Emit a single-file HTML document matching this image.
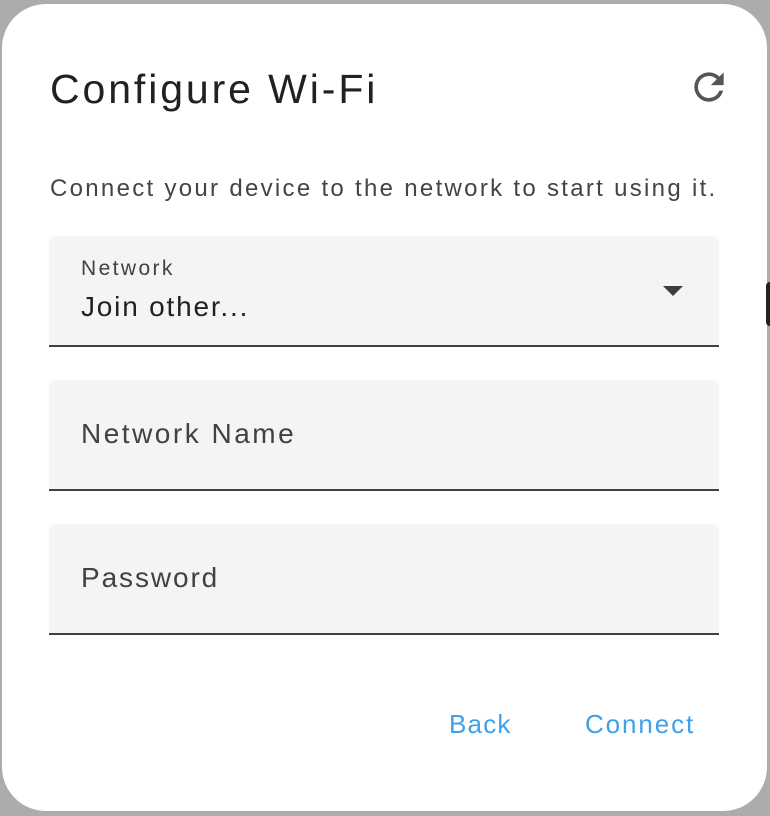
<!DOCTYPE html><html><head><style>
body{margin:0;width:770px;height:816px;background:#acacac;position:relative;overflow:hidden;font-family:"Liberation Sans",sans-serif}
.d{position:absolute;left:2px;top:4px;width:765px;height:807px;background:#fff;border-radius:44px}
.t{position:absolute;left:48px;top:62px;font-size:41px;color:#212121;letter-spacing:2.9px}
.s{position:absolute;left:48px;top:171px;font-size:24px;color:#444;letter-spacing:2.3px}
.f{position:absolute;left:47px;width:670px;background:#f4f4f4;border-radius:6px 6px 0 0;border-bottom:2px solid #414141}
.l{position:absolute;left:32px;color:#414141}
.b{position:absolute;top:705px;font-size:26px;color:#3fa0ea}
</style></head><body>
<div class="d">
<div class="t">Configure Wi-Fi</div>
<svg style="position:absolute;left:685px;top:61px" width="44" height="44" viewBox="0 0 24 24"><path fill="#555" d="M17.65 6.35A7.96 7.96 0 0 0 12 4a8 8 0 1 0 7.73 10h-2.08A6 6 0 1 1 12 6c1.66 0 3.14.69 4.22 1.78L13 11h7V4l-2.35 2.35z"/></svg>
<div class="s">Connect your device to the network to start using it.</div>
<div class="f" style="top:232px;height:109px"><div class="l" style="top:21px;font-size:21px;letter-spacing:2.4px">Network</div><div class="l" style="top:55px;font-size:28px;color:#212121;letter-spacing:1.8px">Join other...</div>
<div style="position:absolute;left:614px;top:50px;border-left:10px solid transparent;border-right:10px solid transparent;border-top:10px solid #3d3b44"></div></div>
<div class="f" style="top:376px;height:109px"><div class="l" style="top:38px;font-size:28px;letter-spacing:2.5px">Network Name</div></div>
<div class="f" style="top:520px;height:109px"><div class="l" style="top:38px;font-size:28px;letter-spacing:1.9px">Password</div></div>
<div class="b" style="left:447px;letter-spacing:1.2px">Back</div>
<div class="b" style="left:583px;letter-spacing:1.9px">Connect</div>
</div>
<div style="position:absolute;left:766px;top:282px;width:8px;height:44px;background:#222;border-radius:4px"></div>
</body></html>
